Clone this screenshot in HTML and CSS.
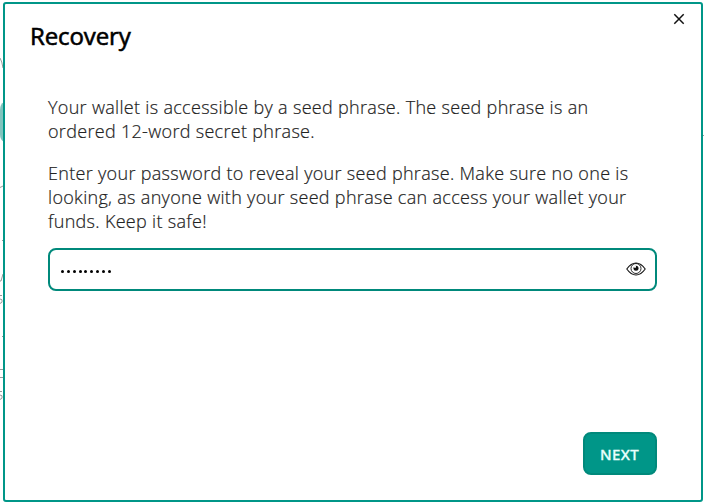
FILE: index.html
```html
<!DOCTYPE html>
<html lang="en">
<head>
<meta charset="utf-8">
<title>Recovery</title>
<link rel="stylesheet" href="styles.css">
</head>
<body>
<svg class="backdrop" width="704" height="504" viewBox="0 0 704 504" fill="none" stroke="#999">
  <path d="M0 58q2 3 3 10"/>
  <path d="M4 102Q0 104 0 110V134Q0 140 4 142Z" fill="#80c4be" stroke="none"/>
  <path d="M0 187.500L3 186M2 240.500H4M0 281h1l2-7M0 295.500h2M0 299q3 0 2 3q-1 2-2 1M2 336.500H4M0 369.500H3M0 377.500H3M0 391.500h2M0 395q3 0 2 3q-1 2-2 1M703 135.500h1"/>
</svg>
<main class="dialog">
  <header class="header">
    <h1 class="title">Recovery</h1>
    <button class="close" aria-label="Close"><svg width="12" height="12" viewBox="0 0 12 12"><path d="M1.300 1.300l9.400 9.400M10.700 1.300l-9.400 9.400" stroke="#111" stroke-width="1.500"/></svg></button>
  </header>
  <section class="content">
    <p>Your wallet is accessible by a seed phrase. The seed phrase is an<br>ordered 12-word secret phrase.</p>
    <p>Enter your password to reveal your seed phrase. Make sure no one is<br>looking, as anyone with your seed phrase can access your wallet your<br>funds. Keep it safe!</p>
    <div class="field">
      <div class="dots"><i></i><i></i><i></i><i></i><i></i><i></i><i></i><i></i><i></i></div>
      <svg class="eye" width="20" height="14" viewBox="0 0 20 14" fill="none" stroke="#111">
        <path d="M.8 7Q5 1 10 1T19.200 7Q15 13 10 13T.8 7Z" stroke-width="1.100"/>
        <circle cx="10" cy="6.500" r="5" stroke-width=".9"/>
        <circle cx="10" cy="6.300" r="2.500" fill="#111" stroke="none"/>
        <circle cx="9" cy="4.800" r="1.100" fill="#fff" stroke="none"/>
      </svg>
    </div>
  </section>
  <footer class="footer"><button class="next">NEXT</button></footer>
</main>
</body>
</html>
```
FILE: styles.css
```css
* { box-sizing: border-box; }
body {
  margin: 0;
  height: 504px;
  padding: 2px 1px 2px 3px;
  overflow: hidden;
  background: #fff;
  font-family: "Open Sans", "Noto Sans", sans-serif;
}
.backdrop { position: absolute; left: 0; top: 0; }
.dialog {
  position: relative;
  display: flex;
  flex-direction: column;
  width: 700px;
  height: 500px;
  border: 2px solid #009688;
  border-radius: 3px;
  background: #fff;
}
.header {
  display: flex;
  justify-content: space-between;
  align-items: flex-start;
  padding: 9px 16px 0 25px;
}
.title {
  margin: 7px 0 0;
  font-size: 24px;
  line-height: 32px;
  font-weight: 400;
  letter-spacing: -.1px;
  color: #000;
  -webkit-text-stroke: .6px #000;
}
.close { display: flex; padding: 0; border: 0; background: none; }
.content { padding: 43px 44px 0 43px; }
p {
  margin: 0 0 18px;
  font-size: 18px;
  line-height: 24px;
  font-weight: 300;
  letter-spacing: .31px;
  color: #222;
  -webkit-text-stroke: .2px #222;
  white-space: nowrap;
}
.field {
  display: flex;
  justify-content: space-between;
  align-items: center;
  width: 609px;
  height: 43px;
  margin-top: -3px;
  padding: 0 9px 0 11px;
  border: 2px solid #00897b;
  border-radius: 8px;
}
.eye { margin-bottom: 1px; }
.dots { display: flex; gap: 2.850px; padding-top: 3px; }
.dots i { width: 3px; height: 3px; border-radius: 1.500px; background: #000; }
.footer { display: flex; justify-content: flex-end; margin-top: auto; padding: 0 44px 25px 0; }
.next {
  width: 74px;
  height: 43px;
  padding: 1px 1px 0 0;
  border: 2px solid #00897b;
  border-radius: 8px;
  background: #009688;
  color: #e8fffc;
  font: 500 15px/20px "Noto Sans", sans-serif;
  letter-spacing: .3px;
  -webkit-text-stroke: .3px #e8fffc;
}
```
